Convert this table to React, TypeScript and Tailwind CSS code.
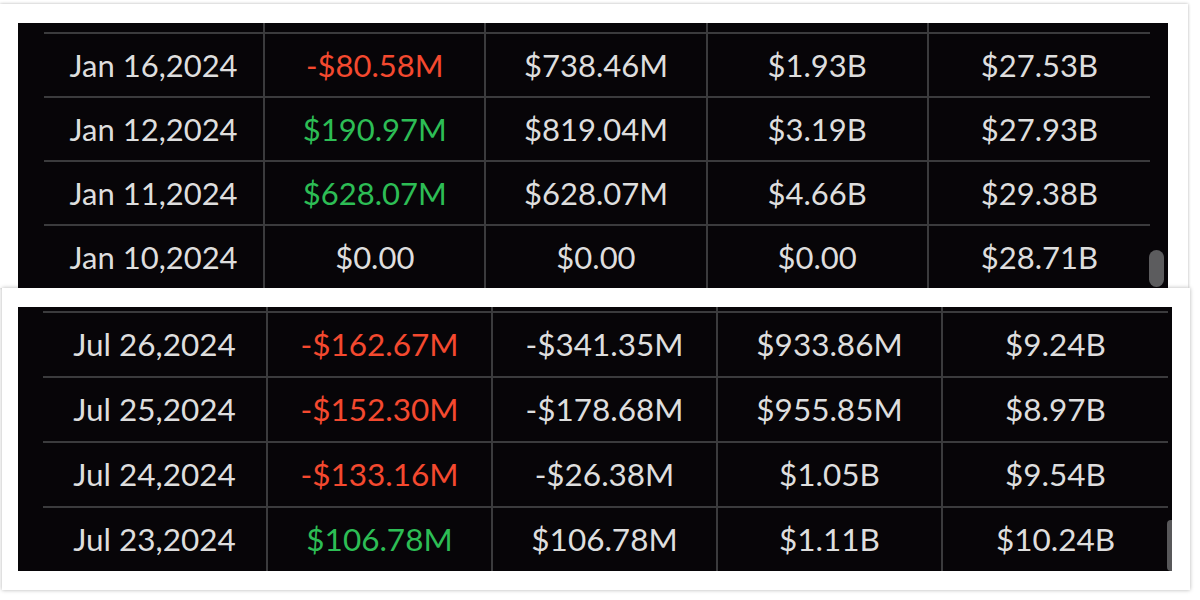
import React from "react"

type Row = string[]

const topRows: Row[] = [
  ["Jan 16,2024", "-$80.58M", "$738.46M", "$1.93B", "$27.53B"],
  ["Jan 12,2024", "$190.97M", "$819.04M", "$3.19B", "$27.93B"],
  ["Jan 11,2024", "$628.07M", "$628.07M", "$4.66B", "$29.38B"],
  ["Jan 10,2024", "$0.00", "$0.00", "$0.00", "$28.71B"],
]

const bottomRows: Row[] = [
  ["Jul 26,2024", "-$162.67M", "-$341.35M", "$933.86M", "$9.24B"],
  ["Jul 25,2024", "-$152.30M", "-$178.68M", "$955.85M", "$8.97B"],
  ["Jul 24,2024", "-$133.16M", "-$26.38M", "$1.05B", "$9.54B"],
  ["Jul 23,2024", "$106.78M", "$106.78M", "$1.11B", "$10.24B"],
]

// net flow column gets red / green, the rest stays light grey
function cellColor(value: string, col: number) {
  if (col !== 1) return "text-[#dedede]"
  if (value.startsWith("-")) return "text-[#f4492f]"
  if (value === "$0.00") return "text-[#dedede]"
  return "text-[#2dbd55]"
}

function TableRow({ row, height, bordered }: { row: Row; height: string; bordered: boolean }) {
  return (
    <div className={`grid grid-cols-5 ${height} ${bordered ? "border-t-2 border-[#3b3b3d]" : ""}`}>
      {row.map((value, i) => (
        <div
          key={i}
          className={`flex items-center justify-center ${i < 4 ? "border-r-2 border-[#3b3b3d]" : ""} ${cellColor(value, i)}`}
        >
          {value}
        </div>
      ))}
    </div>
  )
}

export default function App() {
  const blank = ["", "", "", "", ""]

  return (
    <div className="w-[1200px] h-[600px] bg-white overflow-hidden font-['Lato','Liberation_Sans',sans-serif] leading-none">
      {/* First capture */}
      <div className="mt-[4px] w-[1188px] h-[284px] bg-white pl-[18px] pt-[19px] shadow-[0_0_3px_rgba(0,0,0,0.3)]">
        <div className="relative w-[1150px] h-[265px] bg-[#070508] pl-[26px] overflow-hidden text-[31px]">
          <div className="w-[1106px]">
            <TableRow row={blank} height="h-[9px]" bordered={false} />
            {topRows.map((r) => (
              <TableRow key={r[0]} row={r} height="h-[64px]" bordered />
            ))}
          </div>
          <div className="absolute left-[1131px] top-[227px] w-[15px] h-[37px] rounded-full bg-[#5c5c5e]" />
        </div>
      </div>

      {/* Second capture */}
      <div className="ml-[2px] w-[1188px] h-[302px] bg-white pl-[16px] pt-[19px] shadow-[0_0_4px_rgba(0,0,0,0.3)]">
        <div className="relative w-[1154px] h-[264px] bg-[#070508] pl-[25px] overflow-hidden text-[31.5px]">
          <div className="w-[1125px]">
            <TableRow row={blank} height="h-[4px]" bordered={false} />
            {bottomRows.map((r) => (
              <TableRow key={r[0]} row={r} height="h-[65px]" bordered />
            ))}
          </div>
          <div className="absolute left-[1149px] top-[213px] w-[5px] h-[51px] rounded-l-sm bg-[#58585a]" />
        </div>
      </div>
    </div>
  )
}
